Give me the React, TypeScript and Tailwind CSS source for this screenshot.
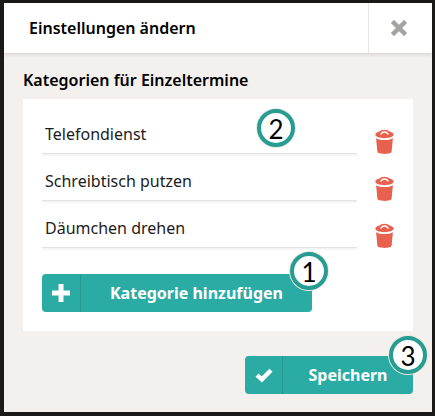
import { useState } from "react"

function TrashIcon() {
  return (
    <svg viewBox="0 0 19 25" className="h-[25px] w-[19px]" fill="#e8614f" aria-hidden="true">
      <path d="M9.5 0.8C7.2 0.8 5.4 1.5 4.6 2.5C2 3.2 0.3 4.3 0.3 5.6C0.3 7.8 4.4 9.2 9.5 9.2C14.6 9.2 18.7 7.8 18.7 5.6C18.7 4.3 17 3.2 14.4 2.5C13.6 1.5 11.8 0.8 9.5 0.8Z" />
      <path d="M6 5C6.8 3.5 8 2.9 9.5 2.9C11 2.9 12.2 3.5 13 5" fill="none" stroke="#fff" strokeWidth="1.5" strokeLinecap="round" />
      <path d="M1.1 9.2C3.3 10.6 6.2 11 9.5 11C12.8 11 15.7 10.6 17.9 9.2L16.6 22.8C16.4 24.2 13.4 24.9 9.5 24.9C5.6 24.9 2.6 24.2 2.4 22.8Z" />
    </svg>
  )
}

function CloseIcon() {
  return (
    <svg viewBox="0 0 18 18" className="h-[18px] w-[18px]" aria-hidden="true">
      <path d="M2.4 2.4L15.6 15.6M15.6 2.4L2.4 15.6" stroke="#a5a4a2" strokeWidth="4.4" />
    </svg>
  )
}

function PlusIcon() {
  return (
    <svg viewBox="0 0 18 18" className="h-[18px] w-[18px]" aria-hidden="true">
      <path d="M9 0V18M0 9H18" stroke="#fff" strokeWidth="5" />
    </svg>
  )
}

function CheckIcon() {
  return (
    <svg viewBox="0 0 18 15" className="h-[15px] w-[18px]" aria-hidden="true">
      <path d="M2 7.2L6.8 11.4L16 2.2" fill="none" stroke="#fff" strokeWidth="4.4" />
    </svg>
  )
}

function StepBadge({ step, className }: { step: number; className: string }) {
  return (
    <span
      className={`absolute flex h-[38px] w-[38px] items-center justify-center rounded-full border-4 border-[#269c92] bg-white pt-[2px] font-[Lato,sans-serif] text-[26px] leading-none font-normal text-black shadow-[0_0_0_1px_#ebe8dc] ${className}`}
    >
      {step}
    </span>
  )
}

export default function App() {
  const [categories, setCategories] = useState([
    { id: 1, name: "Telefondienst" },
    { id: 2, name: "Schreibtisch putzen" },
    { id: 3, name: "Däumchen drehen" },
  ])

  const rename = (id: number, name: string) =>
    setCategories(categories.map((c) => (c.id === id ? { ...c, name } : c)))

  const remove = (id: number) => setCategories(categories.filter((c) => c.id !== id))

  const add = () => setCategories([...categories, { id: Date.now(), name: "" }])

  return (
    <div className="min-h-screen bg-[#1b1a18] pt-[3px] pr-[3px] pb-1 pl-1 font-['Noto_Sans',sans-serif] text-base text-[#1c1c1c]">
      <div className="bg-[#f4f0ee]">
        <header className="flex h-[50px] bg-white shadow-[0_1px_4px_rgba(0,0,0,0.15)]">
          <h1 className="flex flex-1 items-center pl-[25px] font-semibold text-black">Einstellungen ändern</h1>
          <button
            type="button"
            aria-label="Schließen"
            className="flex w-16 items-center justify-center border-l border-[#e6e6e6] pr-1"
          >
            <CloseIcon />
          </button>
        </header>

        <main className="px-[19px] pt-[15px] pb-[18px]">
          <h2 className="mb-[7px] font-semibold text-black">Kategorien für Einzeltermine</h2>

          <section className="bg-white px-[19px] pt-[18px] pb-[19px]">
            <ul className="relative flex flex-col gap-[10px]">
              {categories.map((category) => (
                <li key={category.id} className="flex h-[37px] items-end gap-[18px]">
                  <input
                    type="text"
                    aria-label="Kategorie"
                    value={category.name}
                    onChange={(e) => rename(category.id, e.target.value)}
                    className="h-full min-w-0 flex-1 border-b border-[#e2e2e2] bg-white px-[3px] pb-[2px] shadow-[0_2px_0_#f6f5f5] outline-none"
                  />
                  <button type="button" aria-label="Löschen" onClick={() => remove(category.id)}>
                    <TrashIcon />
                  </button>
                </li>
              ))}
              <StepBadge step={2} className="-top-2 right-[99px]" />
            </ul>

            <button
              type="button"
              onClick={add}
              className="relative mt-[26px] flex h-[38px] w-[270px] rounded bg-[#2aaba3] font-bold text-white"
            >
              <span className="flex h-full w-[39px] items-center justify-center border-r border-[#26988f]">
                <PlusIcon />
              </span>
              <span className="flex h-full flex-1 items-center justify-center">Kategorie hinzufügen</span>
              <StepBadge step={1} className="-top-[22px] -right-4" />
            </button>
          </section>

          <div className="mt-[25px] flex justify-end">
            <button type="button" className="relative flex h-[38px] w-[168px] rounded bg-[#2aaba3] font-bold text-white">
              <span className="flex h-full w-[38px] items-center justify-center border-r border-[#26988f]">
                <CheckIcon />
              </span>
              <span className="flex h-full flex-1 items-center justify-center">Speichern</span>
              <StepBadge step={3} className="-top-5 -right-[14px]" />
            </button>
          </div>
        </main>
      </div>
    </div>
  )
}
